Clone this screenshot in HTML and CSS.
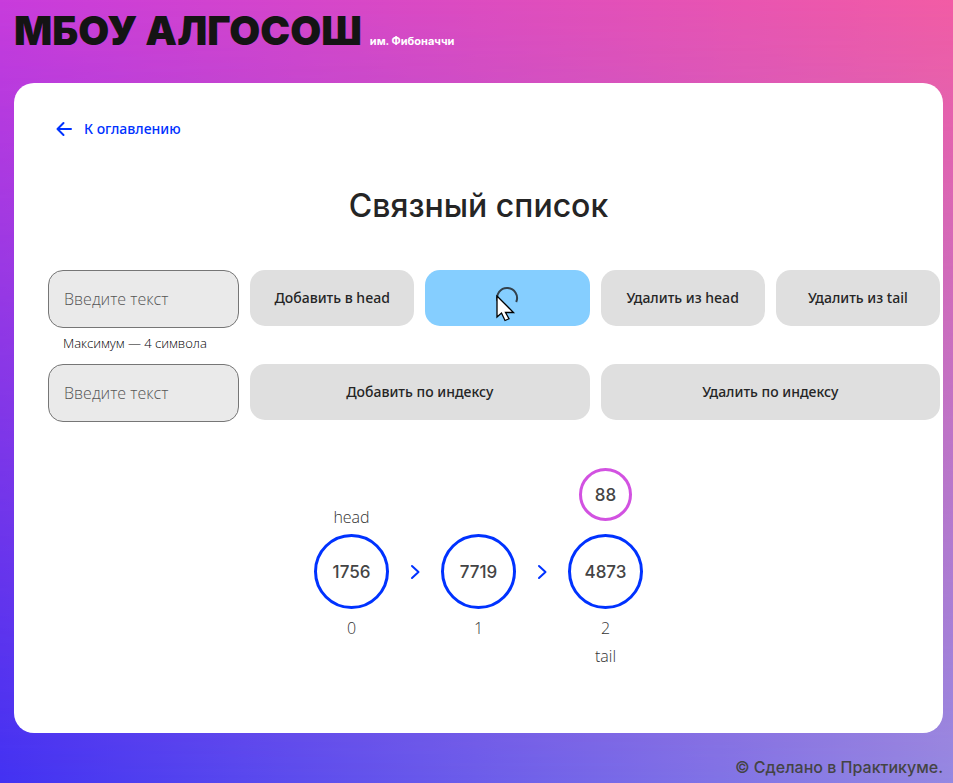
FILE: index.html
```html
<!DOCTYPE html>
<html lang="ru">
<head>
<meta charset="utf-8">
<meta name="viewport" content="width=device-width, initial-scale=1">
<title>Связный список</title>
<link rel="stylesheet" href="styles.css">
</head>
<body>
<div class="page">
  <header class="header">
    <span class="brand">МБОУ АЛГОСОШ</span>
    <span class="brand-note">им. Фибоначчи</span>
  </header>
  <main class="card">
    <a class="back" href="#">
      <svg width="18" height="16" viewBox="0 0 18 16" fill="none" stroke="currentColor" stroke-width="2" stroke-linecap="round" stroke-linejoin="round" aria-hidden="true"><path d="M16 8H2.500M8.500 2L2.500 8L8.500 14"/></svg>
      <span>К оглавлению</span>
    </a>
    <h1 class="title">Связный список</h1>
    <form class="controls">
      <div class="field">
        <input class="input" type="text" maxlength="4" placeholder="Введите текст" aria-label="Значение" aria-describedby="limit">
        <span class="limit" id="limit">Максимум — 4 символа</span>
      </div>
      <button class="button" type="button">Добавить в head</button>
      <button class="button button-loading" type="button" aria-label="Добавить в tail">
        <svg class="spinner" width="24" height="24" viewBox="0 0 24 24" fill="none" stroke="#33414c" stroke-width="2" aria-hidden="true"><path d="M2.500 15A10 10 0 1 1 21.200 16"/></svg>
        <svg class="cursor" width="20" height="27" viewBox="0 0 20 27" aria-hidden="true"><path d="M1 1V22L5.500 18L9 25.500L13 23.800L9.500 17.500H17.500Z" fill="#fff" stroke="#000" stroke-width="1.300"/></svg>
      </button>
      <button class="button" type="button">Удалить из head</button>
      <button class="button" type="button">Удалить из tail</button>
      <div class="field">
        <input class="input" type="text" placeholder="Введите текст" aria-label="Индекс">
      </div>
      <button class="button button-wide" type="button">Добавить по индексу</button>
      <button class="button button-wide" type="button">Удалить по индексу</button>
    </form>
    <div class="list">
      <div class="node">
        <div class="above">head</div>
        <div class="circle">1756</div>
        <div class="below">0</div>
      </div>
      <svg class="arrow" width="10" height="16" viewBox="0 0 10 16" fill="none" stroke="currentColor" stroke-width="2" stroke-linecap="round" stroke-linejoin="round" aria-hidden="true"><path d="M2 2L8.500 8L2 14"/></svg>
      <div class="node">
        <div class="above"></div>
        <div class="circle">7719</div>
        <div class="below">1</div>
      </div>
      <svg class="arrow" width="10" height="16" viewBox="0 0 10 16" fill="none" stroke="currentColor" stroke-width="2" stroke-linecap="round" stroke-linejoin="round" aria-hidden="true"><path d="M2 2L8.500 8L2 14"/></svg>
      <div class="node">
        <div class="above"><div class="circle circle-small">88</div></div>
        <div class="circle">4873</div>
        <div class="below">2</div>
        <div class="below">tail</div>
      </div>
    </div>
  </main>
  <footer class="footer">© Сделано в Практикуме.</footer>
</div>
</body>
</html>
```
FILE: styles.css
```css
* {
  box-sizing: border-box;
}

body {
  margin: 0;
  font-family: "Open Sans", sans-serif;
  color: #252525;
}

.page {
  position: relative;
  isolation: isolate;
  min-height: 100vh;
  padding: 0 10px 0 14px;
  display: flex;
  flex-direction: column;
  background: linear-gradient(to right, #c83cdc, #f25ca5);
}

/* Second colour pair, fading in towards the bottom */
.page::before {
  content: "";
  position: absolute;
  inset: 0;
  z-index: -1;
  background: linear-gradient(to right, #4232f2, #9488e2);
  -webkit-mask-image: linear-gradient(transparent, #000);
  mask-image: linear-gradient(transparent, #000);
}

.header {
  display: flex;
  align-items: baseline;
  gap: 8px;
  padding: 7px 0 28px;
  font-family: Inter, sans-serif;
  line-height: 48px;
}

.brand {
  font-size: 40px;
  font-weight: 900;
  color: #141414;
}

.brand-note {
  font-size: 11px;
  font-weight: 700;
  line-height: 12px;
  color: #fff;
}

.card {
  flex: 1;
  padding: 34px 3px 40px 34px;
  border-radius: 20px;
  background: #fff;
}

.back {
  display: inline-flex;
  align-items: center;
  gap: 11px;
  margin-left: 7px;
  font: 500 14px/24px "Noto Sans", sans-serif;
  color: #0032ff;
  text-decoration: none;
}

.title {
  margin: 44px 31px 44px 0;
  text-align: center;
  font-family: Inter, sans-serif;
  font-size: 32px;
  font-weight: 500;
  line-height: 40px;
}

.controls {
  display: grid;
  grid-template-columns: 191px repeat(4, 1fr);
  column-gap: 11px;
  row-gap: 8px;
  align-items: start;
}

.input {
  display: block;
  width: 100%;
  height: 58px;
  padding: 0 15px;
  border: 1px solid #767676;
  border-radius: 15px;
  background: #eaeaea;
  font: 300 16px/24px "Open Sans", sans-serif;
  color: #252525;
}

.input::placeholder {
  color: #555;
}

.limit {
  display: block;
  padding: 3px 15px 1px;
  font-size: 13px;
  font-weight: 300;
  line-height: 24px;
  white-space: nowrap;
  color: #000;
}

.button {
  position: relative;
  display: flex;
  align-items: center;
  justify-content: center;
  height: 56px;
  padding: 0;
  border: 0;
  border-radius: 15px;
  background: #dfdfdf;
  font: 500 14px/24px "Noto Sans", sans-serif;
  color: #252525;
}

.button-loading {
  background: #85ceff;
}

.button-wide {
  grid-column: span 2;
}

.cursor {
  position: absolute;
  left: calc(50% - 11px);
  top: 25px;
}

.list {
  display: flex;
  justify-content: center;
  align-items: flex-start;
  gap: 21px;
  margin: 45px 31px 0 0;
  color: #333;
}

.node {
  width: 75px;
  display: flex;
  flex-direction: column;
  align-items: center;
}

.above {
  display: flex;
  flex-direction: column;
  align-items: center;
  justify-content: flex-end;
  height: 67px;
  padding-bottom: 5px;
  font-size: 16px;
  font-weight: 300;
  line-height: 24px;
}

.above:has(.circle) {
  padding-bottom: 13px;
}

.circle {
  display: flex;
  align-items: center;
  justify-content: center;
  flex: none;
  width: 75px;
  height: 75px;
  margin-bottom: 5px;
  border: 3px solid #0032ff;
  border-radius: 50%;
  font: 500 17px/24px Inter, sans-serif;
  color: #444;
}

.circle-small {
  width: 53px;
  height: 53px;
  margin: 0;
  border-color: #d252e1;
}

.below {
  font-size: 16px;
  font-weight: 300;
  line-height: 28px;
}

.arrow {
  margin-top: 97px;
  color: #0032ff;
}

.footer {
  padding: 22px 0 4px;
  text-align: right;
  font: 500 16px/24px Inter, sans-serif;
  color: #444;
}
```
